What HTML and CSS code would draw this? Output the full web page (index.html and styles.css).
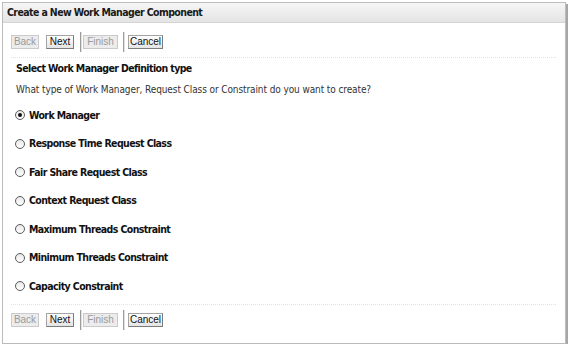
FILE: index.html
```html
<!DOCTYPE html>
<html lang="en">
<head>
  <meta charset="UTF-8" />
  <title>Create a New Work Manager Component</title>
  <link rel="stylesheet" href="styles.css">
</head>
<body>

  <div class="panel">
    <div class="panel-head">Create a New Work Manager Component</div>

    <div class="toolbar">
      <button class="btn back" disabled>Back</button>
      <button class="btn next">Next</button>
      <span class="sep"></span>
      <button class="btn finish" disabled>Finish</button>
      <span class="sep"></span>
      <button class="btn cancel">Cancel</button>
    </div>

    <div class="rule"></div>

    <div class="content">
      <h2>Select Work Manager Definition type</h2>
      <p>What type of Work Manager, Request Class or Constraint do you want to create?</p>

      <ul class="choices">
        <li><span class="radio checked"></span>Work Manager</li>
        <li><span class="radio"></span>Response Time Request Class</li>
        <li><span class="radio"></span>Fair Share Request Class</li>
        <li><span class="radio"></span>Context Request Class</li>
        <li><span class="radio"></span>Maximum Threads Constraint</li>
        <li><span class="radio"></span>Minimum Threads Constraint</li>
        <li><span class="radio"></span>Capacity Constraint</li>
      </ul>
    </div>

    <div class="rule last"></div>

    <div class="toolbar bottom">
      <button class="btn back" disabled>Back</button>
      <button class="btn next">Next</button>
      <span class="sep"></span>
      <button class="btn finish" disabled>Finish</button>
      <span class="sep"></span>
      <button class="btn cancel">Cancel</button>
    </div>
  </div>

</body>
</html>
```

FILE: styles.css
```css
body {
  margin: 0;
  background: #fff;
  font-family: "DejaVu Sans Condensed", "DejaVu Sans", sans-serif;
  font-size: 10px;
  line-height: 13px;
  color: #222;
}

.panel {
  margin: 2px 0 0 2px;
  width: 564px;
  height: 342px;
  border: 1px solid #bcbcbc;
  box-shadow: 2px 2px 0 #a6a6a6;
  box-sizing: border-box;
}

.panel-head {
  height: 19px;
  line-height: 19px;
  padding-left: 4px;
  background: linear-gradient(#f6f6f6, #e4e4e4);
  border-bottom: 1px solid #d4d4d4;
  font-size: 10.5px;
  font-weight: bold;
  letter-spacing: -0.6px;
  color: #1a1a1a;
}

.toolbar {
  display: flex;
  align-items: center;
  height: 20px;
  margin-top: 9px;
  padding-left: 8px;
}

.toolbar.bottom {
  margin-top: 5px;
}

.btn {
  font-family: "Liberation Sans", Arial, sans-serif;
  font-size: 10px;
  height: 14px;
  padding: 0;
  line-height: 12px;
  text-align: center;
  border: 1px solid #a4a4a4;
  border-right-color: #7c7c7c;
  border-bottom-color: #7c7c7c;
  background: linear-gradient(#fefefe, #e4e4e4);
  color: #111;
  border-radius: 0;
}

.btn:disabled {
  color: #9a9a9a;
  border-color: #cacaca;
  background: #ececec;
}

.back { width: 28px; margin-right: 7px; }
.next { width: 28px; margin-right: 6px; }
.finish { width: 35px; margin-right: 5px; }
.cancel { width: 35px; }

.sep {
  width: 1px;
  height: 20px;
  background: #9c9c9c;
  border-right: 1px solid #e0e0e0;
  margin-right: 1px;
}

.sep + .finish + .sep {
  margin-right: 3px;
}

.rule {
  margin: 5px 9px 0 8px;
  border-top: 1px dotted #e2e2e2;
}

.rule.last {
  margin-top: 0;
}

.content {
  padding-left: 12px;
  height: 242px;
}

h2 {
  font-size: 10.5px;
  letter-spacing: -0.6px;
  margin: 4px 0 0 1px;
  color: #111;
}

p {
  margin: 8px 0 0 1px;
  letter-spacing: -0.1px;
  color: #333;
}

.choices {
  list-style: none;
  margin: 5px 0 0 0;
  padding: 0;
}

.choices li {
  display: flex;
  align-items: center;
  height: 28.5px;
  font-size: 10.5px;
  font-weight: bold;
  letter-spacing: -0.6px;
  color: #111;
}

.radio {
  width: 8px;
  height: 8px;
  border: 1px solid #5a5a5a;
  border-radius: 50%;
  margin-right: 4px;
  position: relative;
  background: linear-gradient(#e8e8e8, #fff);
}

.radio.checked::after {
  content: "";
  position: absolute;
  left: 2px;
  top: 2px;
  width: 4px;
  height: 4px;
  border-radius: 50%;
  background: #111;
}
```
